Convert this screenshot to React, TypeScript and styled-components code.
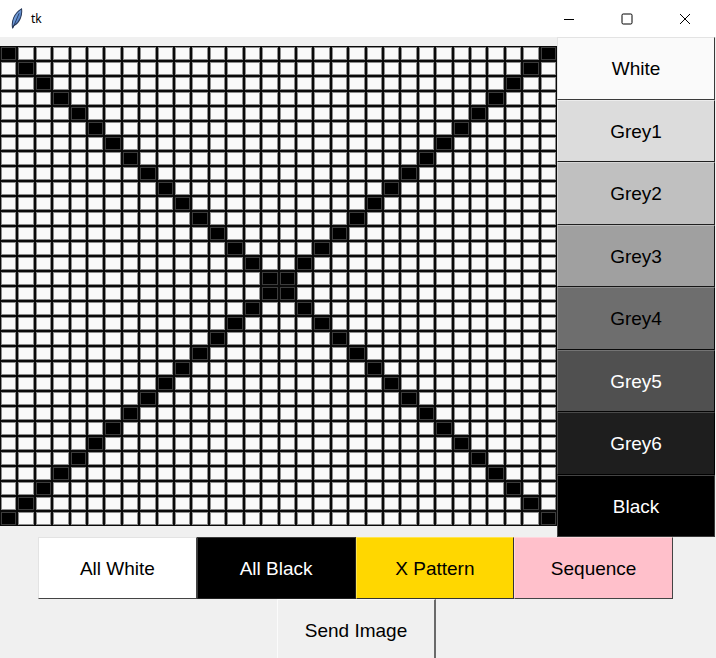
import React from "react";
import styled, { createGlobalStyle } from "styled-components";

const Global = createGlobalStyle`
  html, body { margin: 0; padding: 0; background: #f0f0f0; }
  body { font-family: "Liberation Sans", Arial, sans-serif; }
`;

const Window = styled.div`
  width: 716px;
  height: 658px;
  overflow: hidden;
  background: #f0f0f0;
  display: flex;
  flex-direction: column;
`;

const TitleBar = styled.div`
  height: 37px;
  flex: 0 0 37px;
  background: #ffffff;
  display: flex;
  align-items: center;
  padding-left: 10px;
  padding-right: 2px;
`;

const Title = styled.span`
  font-family: "Noto Sans", "Segoe UI", sans-serif;
  font-size: 12px;
  color: #000;
  margin-left: 8px;
  margin-top: -1px;
`;

const Spacer = styled.div`
  flex: 1;
`;

const Control = styled.div`
  width: 58px;
  height: 37px;
  display: flex;
  align-items: center;
  justify-content: center;
`;

const Main = styled.div`
  display: flex;
  height: 500px;
  flex: 0 0 500px;
`;

const CanvasArea = styled.div`
  width: 557px;
  flex: 0 0 557px;
  padding-top: 9px;
  box-sizing: border-box;
`;

const Grid = styled.div`
  display: grid;
  grid-template-columns: repeat(32, 1fr);
  grid-auto-rows: 15px;
  width: 557px;
`;

const Cell = styled.div<{ $on: boolean }>`
  box-sizing: border-box;
  border: 1px solid #0a0a0a;
  background: ${(p) => (p.$on ? "#000000" : "#fafafa")};
  box-shadow: inset 0 0 0 1px ${(p) => (p.$on ? "#3c3c3c" : "#8c8c8c")};
`;

const Column = styled.div`
  flex: 1;
  display: flex;
  flex-direction: column;
  padding-right: 1px;
`;

const TkButton = styled.button<{ $bg: string; $fg: string; $light: string; $dark: string }>`
  box-sizing: border-box;
  margin: 0;
  padding: 2px 0 0 0;
  font-family: "Liberation Sans", Arial, sans-serif;
  font-size: 19px;
  color: ${(p) => p.$fg};
  background: ${(p) => p.$bg};
  border-style: solid;
  border-width: 1px;
  border-top-color: ${(p) => p.$light};
  border-left-color: ${(p) => p.$light};
  border-bottom-color: ${(p) => p.$dark};
  border-right-color: ${(p) => p.$dark};
  display: flex;
  align-items: center;
  justify-content: center;
  cursor: default;
`;

const SideButton = styled(TkButton)`
  flex: 1;
  width: 100%;
`;

const BottomRow = styled.div`
  display: flex;
  height: 62px;
  flex: 0 0 62px;
  padding-left: 38px;
`;

const WideButton = styled(TkButton)`
  width: 158.75px;
  height: 62px;
  flex: 0 0 158.75px;
`;

const SendRow = styled.div`
  display: flex;
  height: 62px;
  flex: 0 0 62px;
  padding-left: 277px;
`;

const SendButton = styled(TkButton)`
  width: 159px;
  height: 62px;
  border-right-width: 2px;
`;

const side = [
  { label: "White", bg: "#fafafa", fg: "#000", light: "#e3e3e3", dark: "#3a3a3a" },
  { label: "Grey1", bg: "#dcdcdc", fg: "#000", light: "#ececec", dark: "#202020" },
  { label: "Grey2", bg: "#c0c0c0", fg: "#000", light: "#d6d6d6", dark: "#202020" },
  { label: "Grey3", bg: "#a0a0a0", fg: "#000", light: "#bcbcbc", dark: "#151515" },
  { label: "Grey4", bg: "#6e6e6e", fg: "#000", light: "#8e8e8e", dark: "#0a0a0a" },
  { label: "Grey5", bg: "#505050", fg: "#fff", light: "#747474", dark: "#050505" },
  { label: "Grey6", bg: "#1e1e1e", fg: "#fff", light: "#4a4a4a", dark: "#000" },
  { label: "Black", bg: "#000000", fg: "#fff", light: "#444444", dark: "#3a3a3a" },
];

const bottom = [
  { label: "All White", bg: "#ffffff", fg: "#000", light: "#e3e3e3", dark: "#444" },
  { label: "All Black", bg: "#000000", fg: "#fff", light: "#3a3a3a", dark: "#222" },
  { label: "X Pattern", bg: "#ffd700", fg: "#000", light: "#ffe54d", dark: "#333" },
  { label: "Sequence", bg: "#ffc0cb", fg: "#000", light: "#ffd6dd", dark: "#444" },
];

const N = 32;
const cells: boolean[] = [];
for (let r = 0; r < N; r++) {
  for (let c = 0; c < N; c++) {
    cells.push(c === r || c === N - 1 - r);
  }
}

const Feather = () => (
  <svg width="13" height="21" viewBox="0 0 12 20">
    <defs>
      <linearGradient id="fg" x1="0" y1="0" x2="1" y2="1">
        <stop offset="0" stopColor="#9cc4f4" />
        <stop offset="1" stopColor="#2f5fae" />
      </linearGradient>
    </defs>
    <path
      d="M2.2 18.5 C1.2 13 3.5 5 10.8 0.8 C11.6 6.5 9.4 13.5 3.6 16.8 Z"
      fill="url(#fg)"
      stroke="#2a3b5c"
      strokeWidth="1"
    />
    <path d="M2.4 19.4 L8.5 5" stroke="#1f2f4e" strokeWidth="0.8" />
  </svg>
);

export default function App() {
  return (
    <>
      <Global />
      <Window>
        <TitleBar>
          <Feather />
          <Title>tk</Title>
          <Spacer />
          <Control>
            <svg width="12" height="12" viewBox="0 0 12 12">
              <path d="M1 6.5 H11" stroke="#000" strokeWidth="1" />
            </svg>
          </Control>
          <Control>
            <svg width="12" height="12" viewBox="0 0 12 12">
              <rect x="1" y="1" width="10" height="10" rx="1.2" fill="none" stroke="#000" strokeWidth="1" />
            </svg>
          </Control>
          <Control>
            <svg width="12" height="12" viewBox="0 0 12 12">
              <path d="M1 1 L11 11 M11 1 L1 11" stroke="#000" strokeWidth="1" />
            </svg>
          </Control>
        </TitleBar>
        <Main>
          <CanvasArea>
            <Grid>
              {cells.map((on, i) => (
                <Cell key={i} $on={on} />
              ))}
            </Grid>
          </CanvasArea>
          <Column>
            {side.map((b) => (
              <SideButton key={b.label} $bg={b.bg} $fg={b.fg} $light={b.light} $dark={b.dark}>
                {b.label}
              </SideButton>
            ))}
          </Column>
        </Main>
        <BottomRow>
          {bottom.map((b) => (
            <WideButton key={b.label} $bg={b.bg} $fg={b.fg} $light={b.light} $dark={b.dark}>
              {b.label}
            </WideButton>
          ))}
        </BottomRow>
        <SendRow>
          <SendButton $bg="#f0f0f0" $fg="#000" $light="#fbfbfb" $dark="#6a6a6a">
            Send Image
          </SendButton>
        </SendRow>
      </Window>
    </>
  );
}
